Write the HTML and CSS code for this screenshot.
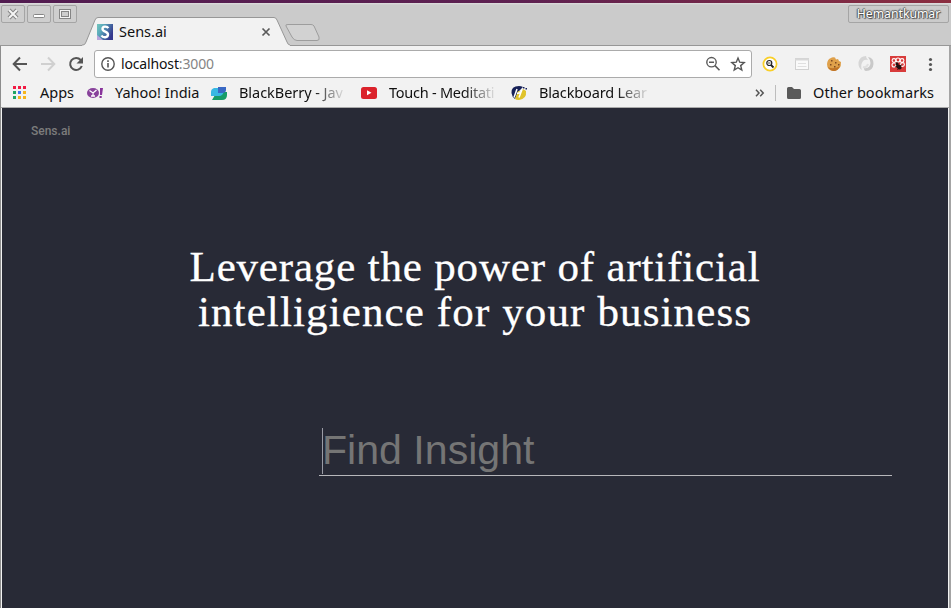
FILE: index.html
```html
<!DOCTYPE html>
<html lang="en">
<head>
<meta charset="utf-8">
<title>Sens.ai</title>
<link rel="stylesheet" href="styles.css">
</head>
<body>
<div class="window">
  <header class="titlebar">
    <div class="controls">
      <span class="control"><svg width="22" height="16" viewBox="0 0 22 16"><path class="shade" d="M7 4l8 8M15 4l-8 8"/><path class="light" d="M7 4l8 8M15 4l-8 8"/></svg></span>
      <span class="control"><svg width="22" height="16" viewBox="0 0 22 16"><rect x="5.500" y="8.500" width="11" height="3" rx="1" fill="#fff" stroke="#858585"/></svg></span>
      <span class="control"><svg width="22" height="16" viewBox="0 0 22 16"><rect x="6.500" y="4.500" width="9" height="7" fill="none" stroke="#858585" stroke-width="3"/><rect x="6.500" y="4.500" width="9" height="7" fill="none" stroke="#f4f4f4"/></svg></span>
    </div>
    <div class="tab">
      <svg class="tab-shape" width="240" height="30" viewBox="0 0 240 30"><path d="M0 28H1Q3 28 4 25L13 3Q14 .5 16 .5H192Q194 .5 195 3L205 25Q206 28 208 28V30H0Z" fill="#f2f2f2"/><path d="M0 28H1Q3 28 4 25L13 3Q14 .5 16 .5H192Q194 .5 195 3L205 25Q206 28 208 28" fill="none" stroke="#979797"/><path d="M206 7.500H229Q231 7.500 232 9L237 20Q238 23.500 235 23.500H215Q212 23.500 210 20L204 9Q203 7.500 206 7.500Z" fill="#d2d2d2" stroke="#9d9d9d"/></svg>
      <div class="tab-content">
        <svg width="16" height="16" viewBox="0 0 16 16"><defs><linearGradient id="fav" x2="1" y2=".5"><stop stop-color="#73c7bd"/><stop offset=".35" stop-color="#5aa9bb"/><stop offset="1" stop-color="#35388e"/></linearGradient></defs><path fill="url(#fav)" d="M0 0h16v16H0z"/><path d="M0 11l6 5H0z" fill="#b9a5dc"/><path d="M11.300 4.200C10 2 5.500 2 5.500 5C5.500 8 11 7.300 11 10.500C11 14 6 14 4.500 11.500" fill="none" stroke="#fff" stroke-width="2.400"/></svg>
        <span class="tab-title">Sens.ai</span>
        <svg class="tab-close" width="10" height="10" viewBox="0 0 10 10"><path d="M1.500 1.500l7 7M8.500 1.500l-7 7" stroke="#5a5a5a" stroke-width="1.700"/></svg>
      </div>
    </div>
    <div class="profile">Hemantkumar</div>
  </header>

  <div class="toolbar">
    <svg class="nav" width="16" height="16" viewBox="0 0 16 16"><path d="M15 8H2M8 1.500L1.700 8L8 14.500" fill="none" stroke="#555" stroke-width="2"/></svg>
    <svg class="nav" width="16" height="16" viewBox="0 0 16 16"><path d="M1 8h13M8 1.500L14.300 8L8 14.500" fill="none" stroke="#d0d0d0" stroke-width="2"/></svg>
    <svg class="nav" width="16" height="16" viewBox="0 0 16 16"><path d="M12.700 4A6 6 0 1 0 13.800 10" fill="none" stroke="#555" stroke-width="2"/><path d="M15 1v6.500H8.500z" fill="#555"/></svg>
    <div class="omnibox">
      <svg width="14" height="14" viewBox="0 0 14 14"><circle cx="7" cy="7" r="6.200" fill="none" stroke="#555" stroke-width="1.400"/><path d="M6.200 6.100h1.600v4.400H6.200zM6.200 3.300h1.600v1.600H6.200z" fill="#555"/></svg>
      <span class="url">localhost<i>:3000</i></span>
      <svg class="magnify" width="16" height="16" viewBox="0 0 16 16"><circle cx="6.500" cy="6.200" r="4.700" fill="none" stroke="#5a5a5a" stroke-width="1.400"/><path d="M4 6.200h5M10 9.600l4.500 4.600" stroke="#5a5a5a" stroke-width="1.600"/></svg>
      <svg width="16" height="16" viewBox="0 0 16 16"><path d="M8 2l1.700 4.200 4.500.4-3.500 3 1.100 4.400L8 11.700 4.200 14l1.100-4.400-3.500-3 4.500-.4z" fill="none" stroke="#555" stroke-width="1.400"/></svg>
    </div>
    <div class="extensions">
      <svg width="16" height="16" viewBox="0 0 16 16"><circle cx="8" cy="8" r="6.600" fill="#fff" stroke="#f9cf27" stroke-width="1.700"/><circle cx="7.300" cy="7" r="2.500" fill="#fff" stroke="#222" stroke-width="1.200"/><path d="M9 9l2.500 2.500" stroke="#222" stroke-width="1.800"/><path d="M6 7h2.600" stroke="#444"/></svg>
      <svg width="16" height="16" viewBox="0 0 16 16"><rect x="1.500" y="2.500" width="13" height="11" fill="#fafafa" stroke="#d1d1d1"/><path d="M1 3.500h14" stroke="#d8d8d8" stroke-width="2"/><path d="M4 7.500h8M3.500 10.500h9" stroke="#e0e0e0"/></svg>
      <svg width="16" height="16" viewBox="0 0 16 16"><path d="M5 2Q6 1 9 1.500L10 3.500L12 3L13 5L15 6Q15.500 14 8 15Q1 15 1 8Q1.500 3 5 2Z" fill="#dfa04a"/><path d="M2 11Q7 14 14 10Q12 15 8 15Q4 15 2 11Z" fill="#bf7427"/><path d="M5 4h1.500v1.500H5zM9 6h1.500v1.500H9zM4 8h1.500v1.500H4zM8 10h1.500v1.500H8zM12 8h1.500v1.500H12z" fill="#804b22"/></svg>
      <svg width="16" height="16" viewBox="0 0 16 16"><path d="M8 0Q2 0 .5 6Q0 12 4 14Q2 9 5 5Q7 3 10 4Q8 2 8 0Z" fill="#d6d6d6"/><path d="M10 1Q16 2 15.500 8Q15 15 8 15Q6 15 6 12Q12 13 12.500 7Q12.500 4 10 1Z" fill="#c9c9c9"/><path d="M5 11Q9 12 10 8" fill="none" stroke="#e0e0e0" stroke-width="2"/></svg>
      <svg width="16" height="16" viewBox="0 0 16 16"><path d="M0 0h16v16H0z" fill="#d83c3b"/><g fill="none" stroke="#fff" stroke-width="1.100"><circle cx="8" cy="4" r="2"/><circle cx="4" cy="4.500" r="1.900"/><circle cx="12" cy="4.500" r="1.900"/><circle cx="4" cy="9" r="2"/><circle cx="12.500" cy="8.500" r="1.900"/></g><ellipse cx="9.500" cy="10.800" rx="3" ry="2" fill="#211" transform="rotate(40 9 10)"/><circle cx="7" cy="7.700" r="1.500" fill="#211"/><path d="M5 11l7-2M7.500 14l3-5" stroke="#211" stroke-width=".8"/></svg>
      <svg width="16" height="16" viewBox="0 0 16 16"><circle cx="8.500" cy="3.500" r="1.600" fill="#555"/><circle cx="8.500" cy="8.500" r="1.600" fill="#555"/><circle cx="8.500" cy="13.500" r="1.600" fill="#555"/></svg>
    </div>
  </div>

  <nav class="bookmarks">
    <a class="bookmark apps"><svg width="16" height="16" viewBox="0 0 16 16"><path d="M1 1h3v3H1zM6 1h3v3H6zM11 1h3v3h-3z" fill="#f21b44"/><path d="M1 6h3v3H1zM1 11h3v3H1z" fill="#20a565"/><path d="M6 6h3v3H6z" fill="#4275f5"/><path d="M11 6h3v3h-3zM6 11h3v3H6zM11 11h3v3h-3z" fill="#f6b51d"/></svg><span>Apps</span></a>
    <a class="bookmark yahoo"><svg width="16" height="16" viewBox="0 0 16 16"><ellipse cx="6" cy="8" rx="6" ry="5" fill="#88429b"/><path d="M2.500 5.500L6 8l3.500-3M6 8v3.200M4 11h4" fill="none" stroke="#fff" stroke-width="1.300"/><path d="M13 3h3l-1 7h-2zM12.500 11h2.200v2h-2.200z" fill="#88339b"/></svg><span>Yahoo! India</span></a>
    <a class="bookmark fade blackberry"><svg width="16" height="16" viewBox="0 0 16 16"><path d="M5 7h11v3q0 5-5 5H1l3-5z" fill="#179c68"/><path d="M3 3h10v3q-1 5-5 5H0V7q0-3 3-4z" fill="#38b8e3"/><path d="M7 2h8v3q0 3-4 3H7z" fill="#3968c4"/></svg><span>BlackBerry - Jav</span></a>
    <a class="bookmark fade touch"><svg width="16" height="16" viewBox="0 0 16 16"><rect y="2" width="16" height="12" rx="2.500" fill="#db222b"/><path d="M6 5.200v5L10.500 7.700z" fill="#fff"/></svg><span>Touch - Meditati</span></a>
    <a class="bookmark fade blackboard"><svg width="16" height="16" viewBox="0 0 16 16"><path d="M8 1Q0 1 .5 8Q1 12 4 14L7 7L12 2Q10 1 8 1Z" fill="#172158"/><path d="M4 14L7 6L10 7L12 4L15 6Q16 14 8 15Q5 15 4 14Z" fill="#e0c32b"/><path d="M3 12.500L6 4M6 8.500l4-1M8 12.500l3-8" stroke="#fff" stroke-width="1.500"/><path d="M12 2h1.500v1.500H12zM14.500 3H16v1.500h-1.500z" fill="#172158"/></svg><span>Blackboard Lear</span></a>
    <a class="bookmark other"><svg class="more" width="10" height="8" viewBox="0 0 10 8"><path d="M1 .8L4 4L1 7.200M5.200 .8l3 3.200-3 3.200" fill="none" stroke="#555" stroke-width="1.500"/></svg><b class="divider"></b><svg width="16" height="16" viewBox="0 0 16 16"><path d="M1 3.500Q1 2 2.500 2H6l2 2h5.500Q15 4 15 5.500v7q0 1.500-1.500 1.500h-11Q1 14 1 12.500z" fill="#5a5a5a"/></svg><span>Other bookmarks</span></a>
  </nav>

  <main class="page">
    <div class="brand">Sens.ai</div>
    <h1><span class="line-one">Leverage the power of artificial</span><span class="line-two">intelligience for your business</span></h1>
    <div class="search"><span class="caret"></span><span class="placeholder">Find Insight</span></div>
  </main>
</div>
</body>
</html>
```
FILE: styles.css
```css
* { box-sizing: border-box; }
body { margin: 0; overflow: hidden; font-family: "Noto Sans", sans-serif; font-size: 14px; color: #111; }
svg { display: block; flex: none; }
.window { display: flex; flex-direction: column; width: 951px; height: 608px; background: #f2f2f2; border-left: 1px solid #8d8d8d; border-right: 2px solid #a4a4a4; }
.titlebar { display: flex; flex: none; height: 46px; margin: 0 -2px 0 -1px; border-top: 3px solid #551e50; border-image: linear-gradient(90deg, #511b50, #5e2151 55%, #8b2e40) 1; background: linear-gradient(#dedede 0, #cbcbcb 2px, #cbcbcb 42px, #979797 42px); }
.controls { display: flex; gap: 2px; width: 82px; padding: 2px 0 0 1px; }
.control { width: 24px; height: 18px; border: 1px solid #a5a5a5; border-radius: 2px; background: #cecece; }
.shade { stroke: #858585; stroke-width: 4; }
.light { stroke: #f5f5f5; stroke-width: 2; }
.tab { display: grid; width: 240px; height: 29px; margin-top: 14px; }
.tab-shape, .tab-content { grid-area: 1 / 1; }
.tab-content { display: flex; align-items: center; width: 190px; height: 29px; padding-left: 15px; }
.tab-title { margin: -2px 0 0 6px; font-size: 14.500px; }
.tab-close { margin-left: auto; margin-right: 1px; }
.profile { width: 101px; height: 18px; margin: 2px 2px 0 auto; border: 1px solid #a5a5a5; border-radius: 2px; color: #fff; text-align: center; font-size: 12.200px; line-height: 16px; text-shadow: 0 0 1px #444, 1px 1px 1px #444, -1px 0 1px #555, 0 -1px 1px #666; }
.toolbar { display: flex; flex: none; align-items: center; height: 36px; padding-left: 11px; }
.nav { margin-right: 12px; }
.omnibox { display: flex; align-items: center; width: 658px; height: 28px; margin-left: -2px; padding: 0 5px 0 6px; border: 1px solid #ababab; border-radius: 3px; background: #fff; }
.url { margin: -2px 0 0 6px; font-size: 14px; letter-spacing: -.15px; }
.url i { font-style: normal; color: #858585; }
.magnify { margin-left: auto; margin-right: 9px; }
.extensions { display: flex; gap: 16px; margin-left: 10px; }
.bookmarks { display: flex; flex: none; align-items: center; height: 26px; padding: 0 0 3px 11px; border-bottom: 1px solid #aaa; }
.bookmark { display: flex; align-items: center; gap: 12px; height: 22px; white-space: nowrap; }
.bookmark span { margin-top: -2px; font-size: 14.500px; }
.apps { width: 75px; }
.yahoo { width: 124px; }
.blackberry, .touch, .blackboard { width: 150px; }
.fade span { -webkit-mask-image: linear-gradient(90deg, #000 72%, rgb(0 0 0 / .1) 100%); mask-image: linear-gradient(90deg, #000 72%, rgb(0 0 0 / .1) 100%); }
.blackberry span { letter-spacing: -.05px; }
.touch span { letter-spacing: -.25px; }
.blackboard span { letter-spacing: -.15px; }
.other { margin-left: auto; margin-right: 15px; gap: 10px; }
.divider { width: 1px; height: 16px; background: #bdbdbd; }
.other span { margin-left: 1px; letter-spacing: .06px; }
.page { display: flex; flex: 1; flex-direction: column; margin: 0 1px; background: #282a36; box-shadow: 0 -1px #aaa; }
.brand { margin: 15px 0 0 29px; height: 16px; color: #7c7c7c; font: 500 12px/16px Roboto, sans-serif; }
h1 { display: flex; flex-direction: column; align-items: center; margin: 105px 0 1px; color: #fff; font: 400 43px/45px "Liberation Serif", serif; white-space: nowrap; -webkit-text-stroke: .3px #fff; }
.line-one { letter-spacing: .83px; }
.line-two { letter-spacing: 1.120px; }
.search { display: flex; width: 573px; height: 49px; margin: 92px 0 0 317px; padding-left: 3px; border-bottom: 1px solid #b7b7bb; }
.caret { width: 1px; height: 46px; margin-top: 1px; background: #9b9ca6; }
.placeholder { margin-left: -1px; color: #757575; font: 41.100px/47px "Liberation Sans", Arial, sans-serif; }
```
